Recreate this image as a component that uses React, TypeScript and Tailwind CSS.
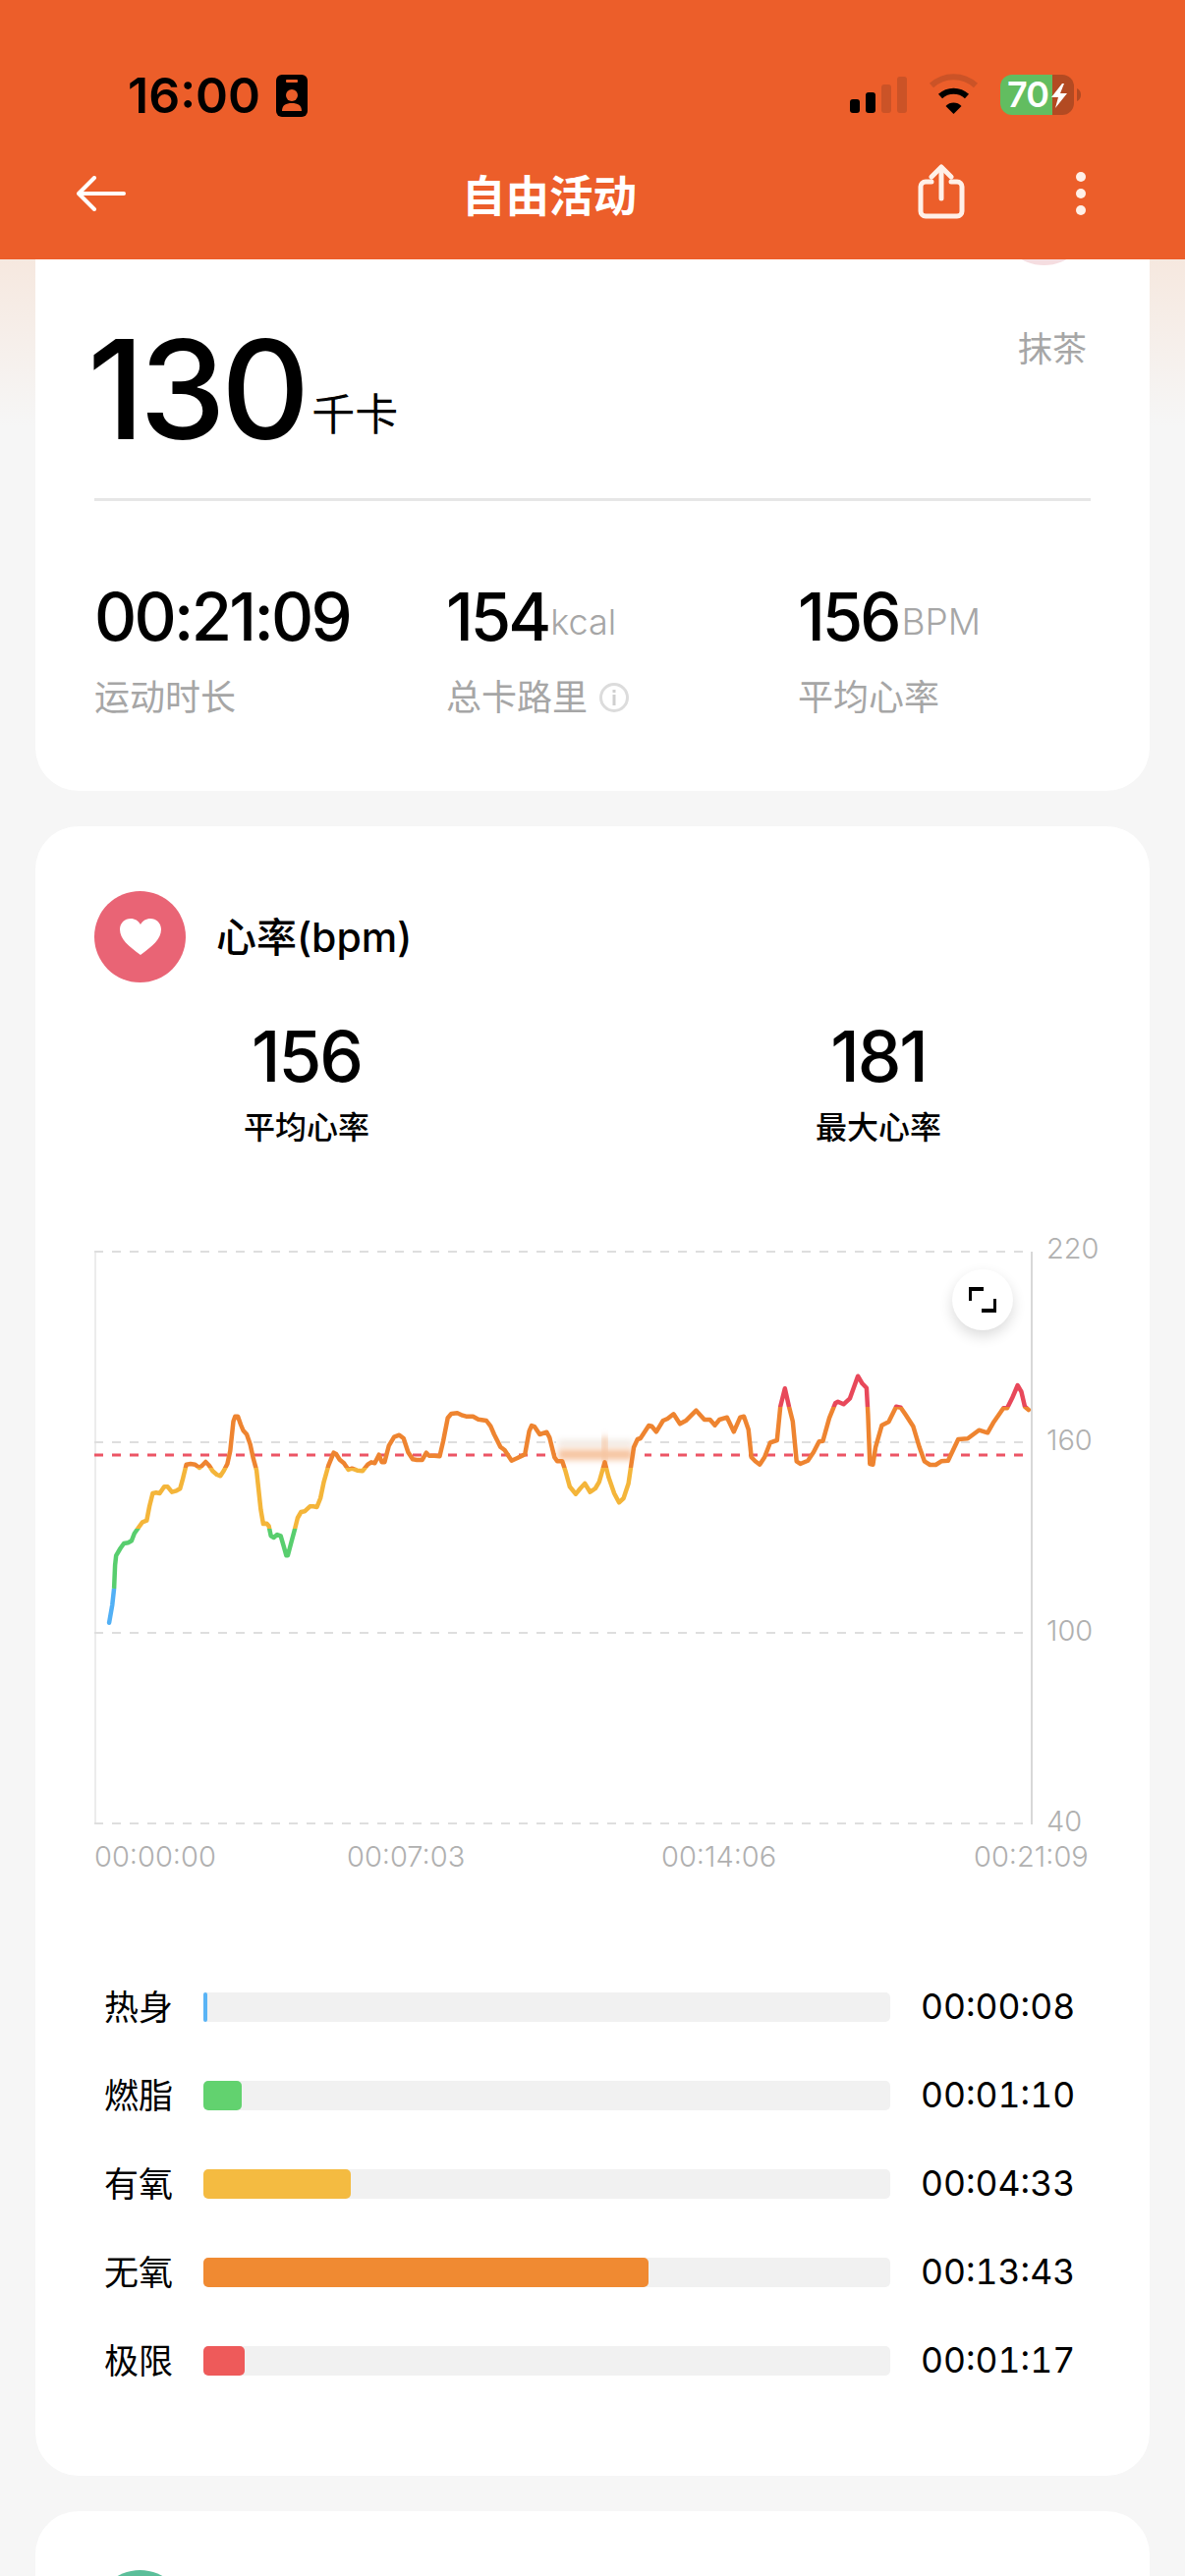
import React from "react";

const SANS = "font-['Inter','Noto_Sans_CJK_SC',sans-serif]";

const partA: [number, number][] = [
  [143,1235],[152,1180],[157,1130],[160,1060],[163,1030],[175,1008],[185,993],[197,991],[207,985],[215,962],[228,943],[238,928],[250,923],[258,880],[267,840],[277,838],[287,840],[300,820],[310,820],[322,836],[335,832],[345,826],[352,800],[363,752],[375,750],[388,752],[400,762],[408,755],[418,744],[428,755],[438,772],[450,783],[460,787],[470,770],[480,750],[488,710],[497,620],[502,605],[510,605],[518,630],[525,648],[535,660],[545,690],[553,730],[563,770],[570,840],[575,890],[582,933],[592,932],[598,940],[604,970],[612,975],[622,966],[632,970],[640,1000],[648,1030],[652,1030],[662,990],[672,950],[680,915],[690,897],[700,895],[715,880],[725,880],[735,882],[745,855],[755,805],[768,755],[783,716],[790,720],[800,737],[812,748],[825,768],[835,764],[850,770],[865,772],[880,752],[890,745],[900,748],[912,722],[920,745],[928,745],[940,695],[955,668],[970,662],[982,672],[995,715],[1008,736],[1020,738],[1035,738],[1047,716],[1055,725],[1070,725],[1085,727],[1095,680],[1108,610],[1118,597],[1135,595],[1150,602],[1160,605],[1180,605],[1195,614],[1218,618],[1230,635],[1240,660],[1258,698],[1270,708],[1290,740],[1305,733],[1320,725],[1328,720],[1340,650],[1347,633],[1355,636],[1370,660],[1390,653],[1398,670],[1412,730],[1420,742],
];
const partB: [number, number][] = [
  [32,742],[40,770],[52,820],[68,842],[80,825],[92,810],[106,836],[120,825],[130,805],[145,745],[155,790],[170,840],[183,868],[195,855],[208,810],[217,740],[222,700],[232,675],[240,672],[262,633],[270,635],[282,652],[300,618],[312,612],[328,598],[345,628],[362,617],[388,587],[410,615],[425,615],[438,632],[450,615],[470,608],[488,652],[505,608],[515,605],[527,645],[535,730],[545,742],[557,752],[570,730],[585,685],[603,678],[612,575],[624,520],[635,575],[645,620],[655,742],[665,750],[685,740],[700,715],[715,682],[725,680],[742,610],[758,565],[765,560],[780,568],[797,550],[818,482],[830,505],[841,518],[845,600],[850,750],[858,752],[865,700],[882,632],[900,622],[920,575],[932,578],[945,600],[965,635],[982,700],[995,742],[1010,753],[1025,753],[1040,742],[1058,740],[1085,675],[1110,673],[1140,647],[1163,655],[1178,625],[1205,580],[1215,580],[1228,550],[1243,510],[1253,530],[1262,575],[1272,585],
];
const linePoints = [
  ...partA.map(([x, y]) => `${(60 + x / 2.8).toFixed(1)},${(1240 + y / 3).toFixed(1)}`),
  ...partB.map(([x, y]) => `${(560 + x / 2.613).toFixed(1)},${(1240 + y / 3).toFixed(1)}`),
].join(" ");

function IdIcon() {
  return (
    <svg width="32" height="43" viewBox="0 0 32 43">
      <rect width="32" height="43" rx="6" fill="#000" />
      <rect x="10" y="5" width="12" height="3" rx="1" fill="#EC5E2A" />
      <circle cx="16" cy="21" r="6" fill="#EC5E2A" />
      <path d="M6 37c0-6 4-8 10-8s10 2 10 8z" fill="#EC5E2A" />
    </svg>
  );
}

function StatusIcons() {
  return (
    <svg width="236" height="58" viewBox="864 69 236 58" className="-mt-[8px]">
      <rect x="865" y="102" width="10" height="14" rx="3" fill="#000" />
      <rect x="881" y="95" width="10" height="21" rx="3" fill="#000" />
      <rect x="897" y="87" width="10" height="29" rx="3" fill="#CB5327" />
      <rect x="913" y="79" width="10" height="37" rx="3" fill="#CB5327" />
      <path d="M948 88a33 33 0 0 1 45 0" fill="none" stroke="#CB5327" strokeWidth="6" />
      <path d="M957 99a20 20 0 0 1 27 0" fill="none" stroke="#000" strokeWidth="6" />
      <path d="M970.500 117l-8-8a11 11 0 0 1 16 0z" fill="#000" />
      <path d="M1071 77h10a12 12 0 0 1 12 12v17a12 12 0 0 1-12 12h-10z" fill="#B34A22" />
      <path d="M1071 77h-41a12 12 0 0 0-12 12v17a12 12 0 0 0 12 12h41z" fill="#62BD60" />
      <path d="M1096 91a7 7 0 0 1 4 6.500a7 7 0 0 1-4 6.500z" fill="#B34A22" />
      <text x="1025" y="110" fill="#fff" fontSize="36" fontWeight="600" letterSpacing="-1" fontFamily="Inter, sans-serif">70</text>
      <path d="M1081 86l-11 14h7l-3 11 12-15h-7l4-10z" fill="#fff" />
    </svg>
  );
}

function ShareIcon() {
  return (
    <svg width="48" height="56" viewBox="0 0 48 56" fill="none" stroke="#FFF0E8" strokeLinecap="round" strokeLinejoin="round">
      <path d="M14 18h-6a5 5 0 0 0-5 5v25a5 5 0 0 0 5 5h32a5 5 0 0 0 5-5v-25a5 5 0 0 0-5-5h-6" strokeWidth="5" />
      <path d="M24 35V4" strokeWidth="5" />
      <path d="M14 13L24 3l10 10" strokeWidth="5" />
    </svg>
  );
}

function Heart() {
  return (
    <svg width="42" height="37" viewBox="0 0 42 37">
      <path d="M21 37C9 28 0 21 0 11 0 4.500 5 0 11 0c4.200 0 8 2.200 10 6 2-3.800 5.800-6 10-6 6 0 11 4.500 11 11 0 10-9 17-21 26z" fill="#fff" />
    </svg>
  );
}

function Chart() {
  const grey = "#dedede";
  return (
    <div className="relative -mx-[60px] mt-[82px] h-[660px]">
      <svg width="1134" height="660" viewBox="36 1250 1134 660" className="block">
        <defs>
          <linearGradient id="hr" gradientUnits="userSpaceOnUse" x1="0" y1="1400" x2="0" y2="1660">
            <stop offset="0.1231" stopColor="#E8485A" />
            <stop offset="0.1231" stopColor="#EE8430" />
            <stop offset="0.3615" stopColor="#EE8430" />
            <stop offset="0.3615" stopColor="#F4B53A" />
            <stop offset="0.6" stopColor="#F4B53A" />
            <stop offset="0.6" stopColor="#58CE6E" />
            <stop offset="0.8346" stopColor="#58CE6E" />
            <stop offset="0.8346" stopColor="#52B0F5" />
          </linearGradient>
          <filter id="blur" x="-20%" y="-100%" width="140%" height="300%">
            <feGaussianBlur stdDeviation="3" />
          </filter>
        </defs>
        <line x1="97" y1="1274" x2="97" y2="1857" stroke="#ececec" strokeWidth="2" />
        <line x1="1050" y1="1274" x2="1050" y2="1857" stroke="#d8d8d8" strokeWidth="2" />
        {[1274, 1468, 1662, 1856].map((y) => (
          <line key={y} x1="96" y1={y} x2="1042" y2={y} stroke={grey} strokeWidth="2" strokeDasharray="9 9" />
        ))}
        <line x1="96" y1="1481" x2="1042" y2="1481" stroke="#EC5565" strokeWidth="3" strokeDasharray="9 9" />
        <rect x="566" y="1464" width="90" height="26" fill="#fff" />
        <rect x="568" y="1466" width="76" height="6" fill="#efe6df" filter="url(#blur)" />
        <rect x="568" y="1475" width="76" height="11" fill="#F6C4A0" filter="url(#blur)" />
        <rect x="613" y="1462" width="5" height="26" fill="#F6C4A0" filter="url(#blur)" />
        <polyline points={linePoints} fill="none" stroke="url(#hr)" strokeWidth="4.500" strokeLinejoin="round" strokeLinecap="round" />
        {[["220", 1281], ["160", 1476], ["100", 1670], ["40", 1864]].map(([t, y]) => (
          <text key={t} x="1065" y={y} fill="#b0b0b0" fontSize="29" fontWeight="300" fontFamily="Inter, sans-serif">{t}</text>
        ))}
        {[["00:00:00", 96], ["00:07:03", 353], ["00:14:06", 673], ["00:21:09", 991]].map(([t, x]) => (
          <text key={t} x={x} y="1900" fill="#b0b0b0" fontSize="29" fontWeight="300" fontFamily="Inter, sans-serif">{t}</text>
        ))}
      </svg>
      <div className="absolute left-[933px] top-[42px] flex h-[62px] w-[62px] items-center justify-center rounded-full bg-white shadow-[0_6px_14px_rgba(0,0,0,0.14)]">
        <svg width="28" height="26" viewBox="0 0 28 26" fill="none" stroke="#000" strokeWidth="4">
          <path d="M1 14V2h14" />
          <path d="M27 12v12H13" />
        </svg>
      </div>
    </div>
  );
}

const zones = [
  { label: "热身", time: "00:00:08", w: "w-[4px]", c: "bg-[#5AB4F5]" },
  { label: "燃脂", time: "00:01:10", w: "w-[39px]", c: "bg-[#62D26F]" },
  { label: "有氧", time: "00:04:33", w: "w-[150px]", c: "bg-[#F4BB41]" },
  { label: "无氧", time: "00:13:43", w: "w-[453px]", c: "bg-[#F08A32]" },
  { label: "极限", time: "00:01:17", w: "w-[42px]", c: "bg-[#EE5A5A]" },
];

export default function App() {
  return (
    <div className={`${SANS} relative h-[2622px] w-[1206px] overflow-hidden bg-[#f6f6f6] text-black`}>
      <header className="relative z-10 h-[264px] bg-[#EC5E2A]">
        <div className="flex h-[158px] items-start justify-between pl-[130px] pr-[106px] pt-[76px]">
          <div className="flex items-center gap-[16px]">
            <span className="text-[50px] font-semibold leading-[43px]">16:00</span>
            <IdIcon />
          </div>
          <StatusIcons />
        </div>
        <div className="relative flex h-[78px] items-center justify-between pl-[78px] pr-[101px]">
          <svg width="50" height="36" viewBox="0 0 50 36" fill="none" stroke="#fff" strokeWidth="4" strokeLinecap="round" strokeLinejoin="round">
            <path d="M48 18H3" />
            <path d="M18 2L2 18l16 16" />
          </svg>
          <span className="absolute left-[470px] top-[17px] text-[44.500px] font-semibold leading-[50px] text-white">自由活动</span>
          <div className="flex items-center gap-[113px]">
            <div className="-mt-[5px]">
              <ShareIcon />
            </div>
            <div className="flex flex-col gap-[7px]">
              <span className="h-[10px] w-[10px] rounded-full bg-[#FFF0E8]" />
              <span className="h-[10px] w-[10px] rounded-full bg-[#FFF0E8]" />
              <span className="h-[10px] w-[10px] rounded-full bg-[#FFF0E8]" />
            </div>
          </div>
        </div>
      </header>

      <main className="bg-[linear-gradient(180deg,#f6e8df_0%,#f6f6f6_100%)] bg-[length:100%_170px] bg-no-repeat px-[36px]">
        <section className="relative rounded-b-[44px] bg-white px-[60px] pb-[73px]">
          <div className="absolute left-[980px] top-[-87px] h-[93px] w-[93px] rounded-full bg-[#f5dde0]" />
          <div className="flex h-[246px] items-start justify-between border-b-[3px] border-[#e6e6e6] pt-[62px]">
            <div className="-ml-[7px] flex items-end">
              <span className="text-[140px] font-medium leading-[140px] tracking-[-5px]">130</span>
              <span className="mb-[19px] ml-[7px] text-[44px] font-normal leading-[50px]">千卡</span>
            </div>
            <span className="mr-[4px] mt-[7px] text-[35px] font-normal leading-[44px] text-[#a6a6a6]">抹茶</span>
          </div>
          <div className="mt-[84px] flex">
            <div className="w-[358px]">
              <div className="text-[67px] font-medium leading-[67px] tracking-[-2.700px]">00:21:09</div>
              <div className="mt-[27px] text-[36px] font-normal leading-[44px] text-[#a6a6a6]">运动时长</div>
            </div>
            <div className="w-[358px]">
              <div className="flex items-end">
                <span className="text-[67px] font-medium leading-[67px] tracking-[-3px]">154</span>
                <span className="mb-[10px] ml-[2px] text-[36px] font-light leading-[36px] text-[#a6a6a6]">kcal</span>
              </div>
              <div className="mt-[27px] flex items-center gap-[12px] text-[36px] font-normal leading-[44px] text-[#a6a6a6]">
                总卡路里
                <svg width="30" height="30" viewBox="0 0 30 30" fill="none">
                  <circle cx="15" cy="15" r="13.500" stroke="#dcdcdc" strokeWidth="3" />
                  <rect x="13.500" y="7" width="3" height="3" fill="#cfcfcf" />
                  <rect x="13.500" y="12" width="3" height="11" fill="#cfcfcf" />
                </svg>
              </div>
            </div>
            <div>
              <div className="flex items-end">
                <span className="text-[67px] font-medium leading-[67px] tracking-[-3px]">156</span>
                <span className="mb-[10px] ml-[3px] text-[37px] font-light leading-[36px] text-[#a6a6a6]">BPM</span>
              </div>
              <div className="mt-[27px] text-[36px] font-normal leading-[44px] text-[#a6a6a6]">平均心率</div>
            </div>
          </div>
        </section>

        <section className="mt-[36px] rounded-[44px] bg-white px-[60px] pb-[72px] pt-[66px]">
          <div className="flex items-center gap-[31px]">
            <div className="flex h-[93px] w-[93px] items-center justify-center rounded-full bg-[#E96475]">
              <Heart />
            </div>
            <span className="text-[41px] font-medium leading-[50px]">心率(bpm)</span>
          </div>
          <div className="mt-[40px] flex justify-between">
            {[["156", "平均心率"], ["181", "最大心率"]].map(([v, l]) => (
              <div key={l} className="w-[432px] text-center">
                <div className="text-[71px] font-medium leading-[70px] tracking-[-2px]">{v}</div>
                <div className="mt-[18px] text-[32px] font-medium leading-[40px]">{l}</div>
              </div>
            ))}
          </div>
          <Chart />
          <div className="mt-[88px]">
            {zones.map((z) => (
              <div key={z.label} className="flex h-[90px] items-center gap-[31px] pl-[10px]">
                <span className="w-[70px] text-[35px] leading-[44px]">{z.label}</span>
                <div className="h-[30px] w-[699px] rounded-[5px] bg-[#f1f1f1]">
                  <div className={`h-full rounded-[5px] ${z.w} ${z.c}`} />
                </div>
                <span className="text-[35.500px] tabular-nums leading-[44px]">{z.time}</span>
              </div>
            ))}
          </div>
        </section>

        <section className="mt-[36px] h-[300px] rounded-[44px] bg-white px-[60px] pt-[60px]">
          <div className="h-[93px] w-[93px] rounded-full bg-[#5BBF9A]" />
        </section>
      </main>
    </div>
  );
}
